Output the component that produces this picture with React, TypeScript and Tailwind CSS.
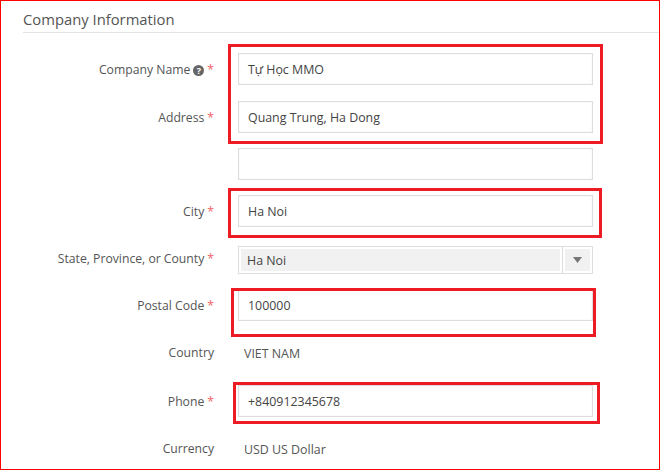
import React from 'react';

const Req = () => <span className="ml-[3px] text-[#f0666b]">*</span>;

function Label({ children, required, className = 'pt-[2px]' }: { children?: React.ReactNode; required?: boolean; className?: string }) {
  return (
    <div className={`flex w-[214px] shrink-0 items-center justify-end whitespace-nowrap pr-[1px] text-[12.2px] text-[#555] ${className}`}>
      {children}
      {required && <Req />}
    </div>
  );
}

function TextField({ value }: { value?: string }) {
  return (
    <div className="ml-[23px] flex h-[32px] w-[355px] items-center border border-[#ddd] pl-[9px] pt-[2px] text-[12.4px] text-[#444] shadow-[inset_0_0_2px_#eee]">
      {value}
    </div>
  );
}

function StaticValue({ value }: { value: string }) {
  return <div className="ml-[29px] flex items-center pt-[2px] text-[12.4px] text-[#555]">{value}</div>;
}

export default function App() {
  return (
    <div
      className="relative h-[470px] w-[660px] overflow-hidden border border-[#f00] bg-white"
      style={{ fontFamily: '"Open Sans", sans-serif' }}
    >
      <div className="pl-[22px]">
        <div className="flex h-[32px] items-center border-b border-[#e3e3e3] pt-[6px] text-[14.8px] text-[#555]">
          Company Information
        </div>
      </div>

      <div className="flex flex-col">
        <div className="mt-[20px] flex h-[32px]">
          <Label required>
            Company Name
            <span className="ml-[3px] flex h-[11px] w-[11px] items-center justify-center rounded-full bg-[#666] text-[9px] font-bold leading-none text-white">
              ?
            </span>
          </Label>
          <TextField value="Tự Học MMO" />
        </div>
        <div className="mt-[16px] flex h-[32px]">
          <Label required>Address</Label>
          <TextField value="Quang Trung, Ha Dong" />
        </div>
        <div className="mt-[15px] flex h-[32px]">
          <Label />
          <TextField />
        </div>
        <div className="mt-[15px] flex h-[32px]">
          <Label required>City</Label>
          <TextField value="Ha Noi" />
        </div>
        <div className="mt-[19px] flex h-[28px]">
          <Label required className="pb-[1px]">State, Province, or County</Label>
          <div className="ml-[23px] flex h-[28px] w-[355px] border border-[#ddd] text-[12.4px] text-[#444]">
            <div className="m-[2px] flex flex-1 items-center bg-[#f1f1f1] pl-[6px] pt-[2px]">Ha Noi</div>
            <div className="flex w-[30px] items-center justify-center border-l border-[#ddd]">
              <div className="flex h-[22px] w-[25px] items-center justify-center bg-[#f1f1f1]">
                <svg width="9" height="6" viewBox="0 0 9 6">
                  <path d="M0 0h9L4.5 6z" fill="#777" />
                </svg>
              </div>
            </div>
          </div>
        </div>
        <div className="mt-[15px] flex h-[32px]">
          <Label required>Postal Code</Label>
          <TextField value="100000" />
        </div>
        <div className="mt-[16px] flex h-[32px]">
          <Label className="pt-0">Country</Label>
          <StaticValue value="VIET NAM" />
        </div>
        <div className="mt-[16px] flex h-[32px]">
          <Label required>Phone</Label>
          <TextField value="+840912345678" />
        </div>
        <div className="mt-[16px] flex h-[32px]">
          <Label className="pt-0">Currency</Label>
          <StaticValue value="USD US Dollar" />
        </div>
      </div>

      {/* red markers drawn over the form */}
      <div className="pointer-events-none absolute left-[227px] top-[43px] h-[100px] w-[375px] border-[3px] border-[#ed1c24]" />
      <div className="pointer-events-none absolute left-[227px] top-[187px] h-[50px] w-[374px] border-[3px] border-[#ed1c24]" />
      <div className="pointer-events-none absolute left-[230px] top-[287px] h-[49px] w-[365px] border-[3px] border-[#ed1c24]" />
      <div className="pointer-events-none absolute left-[232px] top-[381px] h-[42px] w-[367px] border-[3px] border-[#ed1c24]" />
    </div>
  );
}
